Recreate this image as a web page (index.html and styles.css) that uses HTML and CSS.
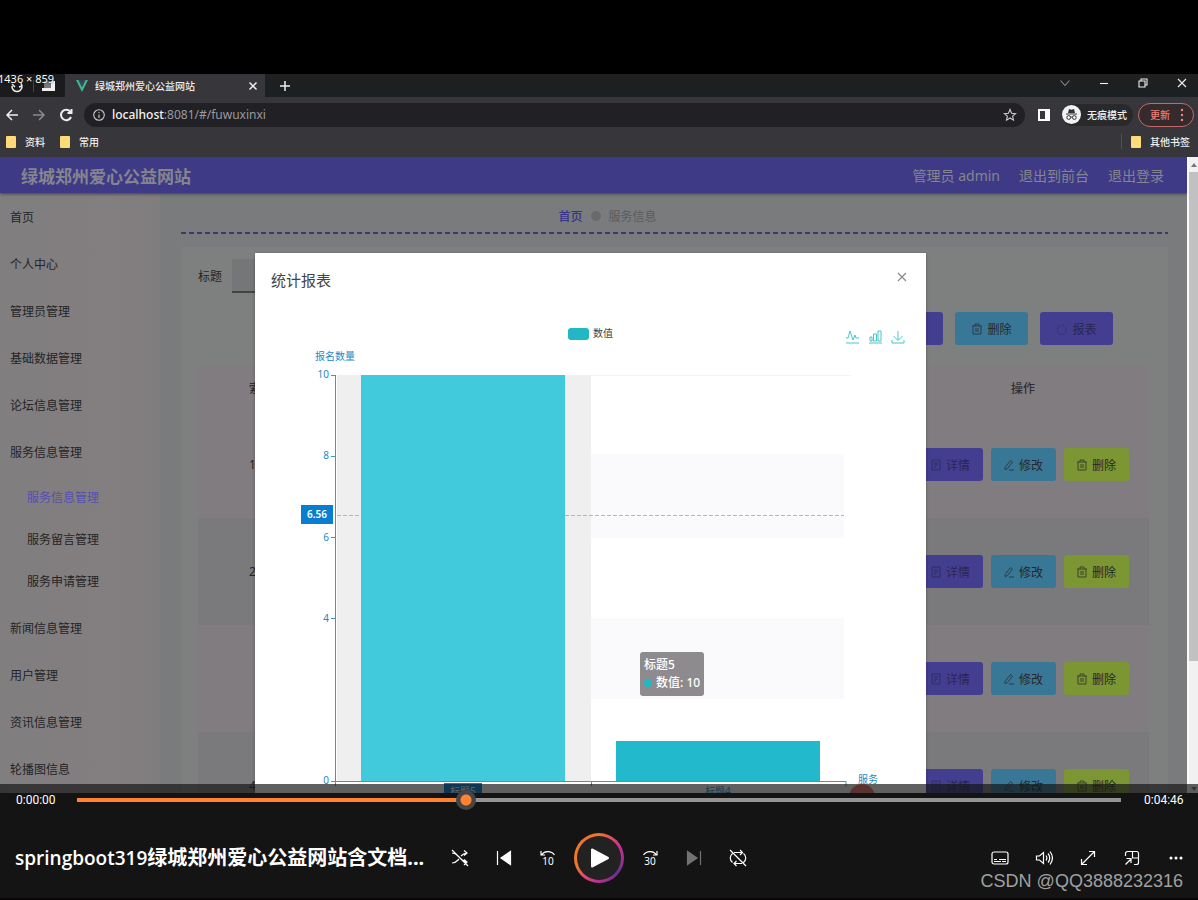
FILE: index.html
```html
<!DOCTYPE html>
<html lang="zh-CN">
<head>
<meta charset="utf-8">
<meta name="viewport" content="width=device-width, initial-scale=1">
<title>springboot319绿城郑州爱心公益网站含文档</title>
<link rel="stylesheet" href="styles.css">
</head>
<body>
<svg class="defs" aria-hidden="true">
  <symbol id="i-trash" viewBox="0 0 12 12"><path d="M1 3h10M4 3V1h4v2M2 3v8h8V3M5 5v4M7 5v4"/></symbol>
  <symbol id="i-edit" viewBox="0 0 12 12"><path d="M2 8.500 7.500 1.500l2 1.500L4.500 9.500 2 10.500zM6 11h5"/></symbol>
  <symbol id="i-doc" viewBox="0 0 12 12"><path d="M2 1h8v10H2zM4 4h4M4 6h4M4 8h2"/></symbol>
  <symbol id="i-pie" viewBox="0 0 12 12"><path d="M4 3a4.500 4.500 0 1 0 5 1M6 1v2l2-1"/></symbol>
</svg>
<div class="player">
  <main class="stage">
    <div class="browser">
      <div class="tabs">
        <div class="tabs-pinned">
          <svg width="16" height="16" viewBox="0 0 16 16" class="line"><path d="M3 8a5 5 0 0 0 10 1M3 6l3 3M12 5l1 3-3 1"/></svg>
          <i class="bar"></i>
          <svg width="14" height="12" viewBox="0 0 14 12"><path d="M0 8h9V1h4v10H0z" fill="#eee"/><path d="M2 1h7v7H2z" fill="#777"/></svg>
        </div>
        <div class="tab">
          <svg width="14" height="12" viewBox="0 0 14 12"><path d="M1 0h2.500L7 7l3.500-7H13L7 12z" fill="#3fb98a"/><path d="M3.500 0H6l1 2 1-2h2.500L7 7z" fill="#35495e"/></svg>
          <span class="tab-title">绿城郑州爱心公益网站</span>
          <button class="bare" aria-label="关闭标签页"><svg width="10" height="10" viewBox="0 0 10 10" class="line"><path d="m1.500 1.500 7 7m0-7-7 7"/></svg></button>
        </div>
        <button class="bare new-tab" aria-label="新标签页"><svg width="12" height="12" viewBox="0 0 12 12" class="line"><path d="M6 1v10M1 6h10"/></svg></button>
        <div class="window-buttons">
          <button class="bare dim" aria-label="搜索标签页"><svg width="12" height="12" viewBox="0 0 12 12" class="line thin"><path d="m1.500 3.500 4.500 5 4.500-5"/></svg></button>
          <button class="bare" aria-label="最小化"><svg width="12" height="12" viewBox="0 0 12 12" class="line thin"><path d="M2 6.500h8"/></svg></button>
          <button class="bare" aria-label="还原"><svg width="12" height="12" viewBox="0 0 12 12" class="line thin"><path d="M2 4h6v6H2zM4 4V2h6v6H8"/></svg></button>
          <button class="bare" aria-label="关闭"><svg width="12" height="12" viewBox="0 0 12 12" class="line thin"><path d="m2 2 8 8m0-8-8 8"/></svg></button>
        </div>
      </div>
      <div class="address-row">
        <button class="bare" aria-label="后退"><svg width="14" height="14" viewBox="0 0 14 14" class="line"><path d="M13 7H2M7 2 2 7l5 5"/></svg></button>
        <button class="bare dim" aria-label="前进"><svg width="14" height="14" viewBox="0 0 14 14" class="line"><path d="M1 7h11M7 2l5 5-5 5"/></svg></button>
        <button class="bare" aria-label="刷新"><svg width="14" height="14" viewBox="0 0 14 14" class="line bold"><path d="M12 9a5.200 5.200 0 1 1-.5-5M12.500 1v4h-4"/></svg></button>
        <div class="address">
          <svg width="12" height="12" viewBox="0 0 12 12" class="line thin"><circle cx="6" cy="6" r="5.300"/><path d="M6 5.500V9M6 3v1"/></svg>
          <span class="url"><b>localhost</b>:8081/#/fuwuxinxi</span>
          <svg width="14" height="14" viewBox="0 0 14 14" class="line thin"><path d="m7 1.500 1.600 3.700 4 .4-3 2.600.9 4L7 10l-3.500 2.200.9-4-3-2.600 4-.4z"/></svg>
        </div>
        <svg class="side-panel" width="12" height="12" viewBox="0 0 12 12"><path d="M0 0h12v12H0zM2 2v8h5V2z" fill="#fff" fill-rule="evenodd"/></svg>
        <span class="incognito">
          <svg width="19" height="19" viewBox="0 0 19 19"><circle cx="9.500" cy="9.500" r="9.500" fill="#f1f3f4"/><path d="M6 8l1-4 2.500.7L12 4l1 4zM4 8.500h11v1H4z" fill="#333"/><g fill="none" stroke="#333"><circle cx="6.700" cy="12.500" r="1.900"/><circle cx="12.300" cy="12.500" r="1.900"/><path d="M8.600 12h1.800"/></g></svg>
          无痕模式
        </span>
        <button class="update">更新<svg width="4" height="14" viewBox="0 0 4 14" fill="#ee8880"><circle cx="2" cy="2" r="1.200"/><circle cx="2" cy="7" r="1.200"/><circle cx="2" cy="12" r="1.200"/></svg></button>
      </div>
      <div class="bookmarks">
        <a href="#"><i class="folder"></i>资料</a>
        <a href="#"><i class="folder"></i>常用</a>
        <a href="#" class="other"><i class="folder"></i>其他书签</a>
      </div>
      <div class="viewport">
        <div class="app">
          <header class="app-header">
            <h1>绿城郑州爱心公益网站</h1>
            <span>管理员 admin</span>
            <a href="#">退出到前台</a>
            <a href="#">退出登录</a>
          </header>
          <div class="app-body">
            <nav class="side">
              <a href="#">首页</a>
              <a href="#">个人中心</a>
              <a href="#">管理员管理</a>
              <a href="#">基础数据管理</a>
              <a href="#">论坛信息管理</a>
              <a href="#">服务信息管理</a>
              <div class="sub">
                <a href="#" class="active">服务信息管理</a>
                <a href="#">服务留言管理</a>
                <a href="#">服务申请管理</a>
              </div>
              <a href="#">新闻信息管理</a>
              <a href="#">用户管理</a>
              <a href="#">资讯信息管理</a>
              <a href="#">轮播图信息</a>
            </nav>
            <section class="content">
              <div class="crumbs"><a href="#">首页</a><i class="crumb-dot"></i><span>服务信息</span></div>
              <div class="divider"></div>
              <div class="card">
                <div class="search"><label for="q">标题</label><input id="q" type="text"></div>
                <div class="toolbar">
                  <button class="btn purple">新增</button>
                  <button class="btn blue"><svg><use href="#i-trash"/></svg>删除</button>
                  <button class="btn purple faint"><svg><use href="#i-pie"/></svg>报表</button>
                </div>
                <table class="grid">
                  <thead><tr><th>索引</th><th class="ops">操作</th></tr></thead>
                  <tbody>
                    <tr><td>1</td><td><div class="row-ops"><button class="btn purple"><svg><use href="#i-doc"/></svg>详情</button><button class="btn blue"><svg><use href="#i-edit"/></svg>修改</button><button class="btn green"><svg><use href="#i-trash"/></svg>删除</button></div></td></tr>
                    <tr><td>2</td><td><div class="row-ops"><button class="btn purple"><svg><use href="#i-doc"/></svg>详情</button><button class="btn blue"><svg><use href="#i-edit"/></svg>修改</button><button class="btn green"><svg><use href="#i-trash"/></svg>删除</button></div></td></tr>
                    <tr><td></td><td><div class="row-ops"><button class="btn purple"><svg><use href="#i-doc"/></svg>详情</button><button class="btn blue"><svg><use href="#i-edit"/></svg>修改</button><button class="btn green"><svg><use href="#i-trash"/></svg>删除</button></div></td></tr>
                    <tr><td>4</td><td><div class="row-ops"><button class="btn purple"><svg><use href="#i-doc"/></svg>详情</button><button class="btn blue"><svg><use href="#i-edit"/></svg>修改</button><button class="btn green"><svg><use href="#i-trash"/></svg>删除</button></div></td></tr>
                  </tbody>
                </table>
              </div>
            </section>
          </div>
          <div class="dialog" role="dialog" aria-labelledby="dlg-title">
            <div class="dialog-head">
              <h2 id="dlg-title">统计报表</h2>
              <button class="bare" aria-label="关闭"><svg width="10" height="10" viewBox="0 0 10 10" class="line thin"><path d="m1 1 8 8m0-8-8 8"/></svg></button>
            </div>
            <svg class="chart" viewBox="255 305 671 488" role="img" aria-label="报名数量柱状图">
              <rect x="568" y="328" width="21" height="12" rx="3" fill="#21b7c5"/>
              <text x="593" y="337" class="legend">数值</text>
              <g class="tools">
                <path d="M846 343h13M846 338h2l2-7 3 9 2-5 1 3h3"/>
                <path d="M869 343h13M870 341v-4h2v4zM873.500 341v-7h3v7zM878 341v-10h3v10z"/>
                <path d="M892 340v3h12v-3M898 331v9M893.500 336l4.500 4.500 4.500-4.500"/>
              </g>
              <path d="M591 454h253v84H591zM591 618h253v81H591z" fill="#faf9fc"/>
              <path d="M337 375h254v406H337z" fill="#efefef"/>
              <path d="M591 375.500h260" stroke="#f3f2f8"/>
              <path d="M361 375h204v406H361z" fill="#41cadb"/>
              <path d="M616 741h204v40H616z" fill="#22b9cd"/>
              <path d="M337 515.500h24M565 515.500h279" stroke="#b5b5b9" stroke-dasharray="4 2"/>
              <path d="M335.500 375v411M331 375.500h5M331 456.500h5M331 537.500h5M331 618.500h5M331 781.500h515v5M591.500 781v5" class="axis"/>
              <g class="axis-text">
                <text x="315" y="360">报名数量</text>
                <g text-anchor="end"><text x="329" y="378">10</text><text x="329" y="459">8</text><text x="329" y="541">6</text><text x="329" y="622">4</text><text x="329" y="784">0</text></g>
                <text x="858" y="783">服务</text>
                <text x="718" y="795" text-anchor="middle">标题4</text>
              </g>
              <rect x="301" y="505" width="32" height="19" fill="#087ed0"/>
              <text x="317" y="518" class="pointer">6.56</text>
              <rect x="444" y="783" width="38" height="19" fill="#087ed0"/>
              <text x="463" y="795" class="pointer-cat">标题5</text>
              <circle cx="862" cy="797" r="13" fill="#f0786e"/>
            </svg>
            <div class="tip"><div>标题5</div><div><i></i>数值: 10</div></div>
          </div>
        </div>
        <div class="scrollbar"><i class="up"></i><i class="thumb"></i><i class="down"></i></div>
      </div>
    </div>
    <span class="dimensions">1436 × 859</span>
  </main>
  <footer class="controls">
    <div class="timeline">
      <time>0:00:00</time>
      <input type="range" min="0" max="1000" value="370" aria-label="播放进度">
      <time>0:04:46</time>
    </div>
    <div class="deck">
      <div class="title"><span>springboot319</span>绿城郑州爱心公益网站含文档...</div>
      <div class="group">
        <button class="ctl" aria-label="随机播放"><svg viewBox="0 0 18 18"><path d="M1 4c4 0 5 2 8 5s4 4 7 4M1 14c4 0 5-2 7-4M10 7c2-2 3-3 6-3M13 1.500 16 4l-3 2.500M13 10.500l3 2.500-3 3M1 1l16 16"/></svg></button>
        <button class="ctl" aria-label="上一个"><svg viewBox="0 0 18 18"><path d="M2.500 2v14"/><path d="M15.500 2.500v13L6 9z" fill="#fff"/></svg></button>
        <button class="ctl" aria-label="后退10秒"><svg viewBox="0 0 18 18"><path d="M2 2v4h4M2.500 6C5 2 12 1 15.500 6"/><text x="9" y="16">10</text></svg></button>
        <button class="play" aria-label="播放"><span><svg width="22" height="22" viewBox="0 0 22 22"><path d="M4 2.500v17L20 11z" fill="#fff" stroke="#fff" stroke-width="2" stroke-linejoin="round"/></svg></span></button>
        <button class="ctl" aria-label="前进30秒"><svg viewBox="0 0 18 18"><path d="M16 2v4h-4M15.500 6C13 2 6 1 2.500 6"/><text x="9" y="16">30</text></svg></button>
        <button class="ctl off" aria-label="下一个"><svg viewBox="0 0 18 18"><path d="M15.500 2v14"/><path d="M2.500 2.500v13L12 9z" fill="#fff"/></svg></button>
        <button class="ctl" aria-label="循环关闭"><svg viewBox="0 0 18 18"><path d="M5 3.500h8.500M11 1l2.500 2.500L11 6M13 14.500H5M7.500 12 5 14.500 7.500 17M3.500 4.500C.500 7 .500 11 3.500 13.500M14.500 13.500c3-2.500 3-6.500 0-9M1 1l16 16"/></svg></button>
      </div>
      <div class="group end">
        <button class="ctl" aria-label="字幕"><svg viewBox="0 0 18 18"><rect x="1" y="3" width="16" height="12" rx="2"/><path d="M3 12.500h7M11 12.500h4M3 10.500h3M8 10.500h7"/></svg></button>
        <button class="ctl" aria-label="音量"><svg viewBox="0 0 18 18"><path d="M1.500 7v4h3l4 3.500v-11L4.500 7zM11 6.500c1 1.500 1 3.500 0 5M13 4.500c2.300 2.500 2.300 6.500 0 9M15 2.500c3 4 3 9 0 13"/></svg></button>
        <button class="ctl" aria-label="全屏"><svg viewBox="0 0 18 18"><path d="M2.500 15.500l13-13M10 2.500h5.500V8M2.500 10v5.500H8"/></svg></button>
        <button class="ctl" aria-label="小窗播放"><svg viewBox="0 0 18 18"><path d="M2.500 7V4.500a2 2 0 0 1 2-2h9a2 2 0 0 1 2 2v9a2 2 0 0 1-2 2H11M9.500 3v6h6M2.500 15.500 8 10M3.500 9.500H8V14"/></svg></button>
        <button class="ctl" aria-label="更多"><svg viewBox="0 0 18 18"><g fill="#fff" stroke="none"><circle cx="4" cy="9" r="1.500"/><circle cx="9" cy="9" r="1.500"/><circle cx="14" cy="9" r="1.500"/></g></svg></button>
      </div>
    </div>
    <span class="watermark">CSDN @QQ3888232316</span>
  </footer>
</div>
</body>
</html>
```
FILE: styles.css
```css
* { box-sizing: border-box; }
body { margin: 0; background: #000; font-family: "Noto Sans", "Noto Sans CJK SC", sans-serif; font-size: 12px; }
a { color: inherit; text-decoration: none; }
button { font: inherit; color: inherit; cursor: pointer; }
h1, h2 { margin: 0; }
.defs { display: none; }
.bare { display: flex; padding: 0; border: 0; background: none; }
.line { fill: none; stroke: currentColor; stroke-width: 1.5; }
.line.thin { stroke-width: 1.1; }
.line.bold { stroke-width: 2; }

.player { display: flex; flex-direction: column; height: 100vh; }
.stage { position: relative; flex: 1; min-height: 0; padding-top: 74px; overflow: hidden; }
.stage::after { content: ""; position: absolute; z-index: 5; left: 0; right: 0; bottom: 0; height: 9px; background: rgba(20, 20, 20, .68); }
.browser { display: flex; flex-direction: column; height: 100%; background: #37363a; color: #eee; }
.dimensions { position: absolute; top: 72px; left: -2px; font-size: 11px; line-height: 14px; color: #fff; text-shadow: 0 0 2px #000; }

.tabs { display: flex; height: 25px; padding-bottom: 2px; background: linear-gradient(#20211f, #1b2024 23px, #37363a 23px); }
.tabs-pinned { display: flex; align-items: center; gap: 8px; width: 65px; padding-left: 9px; background: #1b1b1d; border-radius: 0 0 6px 0; }
.tabs-pinned .bar { width: 1px; height: 12px; background: #444; }
.tab { display: flex; align-items: center; gap: 6px; width: 200px; padding: 0 7px 0 10px; background: #37363a; }
.tab-title { flex: 1; font-size: 10px; font-weight: 500; white-space: nowrap; }
.new-tab { align-items: center; padding-left: 14px; }
.window-buttons { display: flex; align-items: center; gap: 27px; height: 18px; margin-left: auto; padding-right: 10px; }

.address-row { display: flex; align-items: center; height: 31px; padding: 0 4px 0 5px; }
.address-row > .bare { margin-right: 13px; }
.dim { color: #8a8a8d; }
.address { display: flex; flex: 1; align-items: center; gap: 7px; height: 24px; padding: 0 8px 0 9px; margin-left: -2px; border-radius: 12px; background: #212125; color: #ccc; }
.url { flex: 1; color: #9a9a9e; }
.url b { font-weight: 500; color: #f4f4f4; }
.side-panel { margin: 0 8px 0 13px; }
.incognito { display: flex; align-items: center; gap: 6px; height: 22px; padding-right: 6px; margin: 0 5px 0 4px; border-radius: 11px; background: #29292c; font-size: 10px; font-weight: 500; white-space: nowrap; }
.update { display: flex; align-items: center; justify-content: center; gap: 10px; width: 56px; height: 24px; padding: 0 2px 0 4px; border: 1px solid #c4696b; border-radius: 12px; background: #352a2c; color: #ee7f78; font-size: 10px; font-weight: 500; white-space: nowrap; }

.bookmarks { display: flex; align-items: center; gap: 15px; height: 27px; padding: 0 8px 4px 6px; font-size: 10px; font-weight: 500; }
.bookmarks a { display: flex; align-items: center; gap: 9px; }
.bookmarks .other { margin-left: auto; padding-left: 9px; border-left: 1px solid #515054; }
.folder { width: 10px; height: 12px; background: #fcdb78; border-radius: 1px; }

.viewport { display: flex; flex: 1; min-height: 0; }
.app { position: relative; display: flex; flex: 1; flex-direction: column; min-width: 0; overflow: hidden; color: #242426; }
.app-header { display: flex; flex: none; align-items: center; gap: 19px; height: 36px; padding: 0 23px 0 21px; background: #3f3a86; color: #85858f; font-size: 14px; box-shadow: 0 1px 3px rgba(0, 0, 0, .5); z-index: 1; }
.app-header h1 { flex: 1; font-size: 17px; font-weight: 700; }
.app-body { display: flex; flex: 1; min-height: 0; }
.side { flex: none; width: 160px; background: linear-gradient(90deg, #817e7f, #837e80 70%, #807d7f); }
.side a { display: flex; align-items: center; height: 47px; padding: 0 10px; }
.sub { padding: 1px 0 2px; }
.sub a { height: 42px; padding: 0 27px; }
.side .active { color: #544eb0; }
.content { flex: 1; min-width: 0; padding: 0 19px 0 21px; background: #797b7c; }
.crumbs { display: flex; align-items: center; justify-content: center; gap: 8px; height: 39px; padding: 6px 134px 0 0; color: #5c5c5e; }
.crumbs a { color: #37328c; font-weight: 500; }
.crumb-dot { width: 10px; height: 10px; border-radius: 5px; background: #6a6a6c; }
.divider { height: 2px; background: repeating-linear-gradient(90deg, #3b3973 0 5px, transparent 5px 8px); }
.card { margin-top: 13px; padding-top: 12px; background: #7e8080; }
.search { display: flex; align-items: center; gap: 10px; height: 34px; margin: 0 17px; }
.search input { width: 140px; height: 34px; border: 0; border-bottom: 2px solid #444447; background: #757678; }
.toolbar { display: flex; justify-content: flex-end; gap: 12px; padding: 19px 55px 20px 0; }
.btn { display: flex; align-items: center; justify-content: center; gap: 4px; width: 65px; height: 33px; padding: 0; border: 0; border-radius: 3px; color: #26282c; }
.btn svg { width: 12px; height: 12px; fill: none; stroke: currentColor; opacity: .75; }
.toolbar .btn { width: 73px; }
.purple { background: #433e90; color: #292655; }
.blue { background: #397797; }
.green { background: #7b9632; }
.faint svg { opacity: .4; }
.grid { width: calc(100% - 36px); margin: 0 18px 0 17px; border-collapse: collapse; background: #807c7f; }
.grid th { height: 46px; padding: 0; font-weight: 500; text-align: left; color: #303032; }
.grid th:first-child, .grid td:first-child { padding-left: 51px; }
.grid th.ops { width: 252px; text-align: center; }
.grid td { height: 107px; padding: 0; }
.grid tbody tr:nth-child(even) { background: #7a7a7c; }
.row-ops { display: flex; justify-content: center; gap: 8px; }

.dialog { position: absolute; top: 96px; left: 255px; width: 671px; background: #fff; z-index: 2; box-shadow: 0 1px 3px rgba(0, 0, 0, .3); color: #555; }
.dialog-head { display: flex; align-items: center; justify-content: space-between; height: 52px; padding: 0 19px 0 16px; }
.dialog-head h2 { font-size: 15px; font-weight: 400; color: #444; }
.dialog-head .bare { color: #888; padding-bottom: 4px; }
.chart { display: block; width: 100%; }
.chart text { font-size: 10px; }
.chart .legend { fill: #444; }
.tools { fill: none; stroke: #4cc5ca; }
.axis { fill: none; stroke: #3f97c5; }
.axis-text { fill: #2887c4; }
.chart .pointer { fill: #fff; font-size: 10px; font-weight: 600; text-anchor: middle; }
.chart .pointer-cat { fill: #fff; text-anchor: middle; }
.tip { position: absolute; top: 399px; left: 385px; padding: 4px; border-radius: 3px; background: #8e8b8f; color: #fff; font-weight: 500; line-height: 18px; white-space: nowrap; }
.tip i { display: inline-block; width: 8px; height: 8px; margin-right: 4px; border-radius: 4px; background: #21b7c5; }

.scrollbar { display: flex; flex-direction: column; width: 11px; background: #f1f1f1; border-left: 2px solid #fafafa; }
.scrollbar .up, .scrollbar .down { width: 0; margin: 6px auto 5px; border: 3px solid transparent; border-top: 0; border-bottom: 4px solid #777; }
.scrollbar .thumb { flex: 0 1 489px; background: #c1c1c1; }
.scrollbar .down { margin: auto auto 2px; border-top: 4px solid #777; border-bottom: 0; }

.controls { position: relative; z-index: 6; height: 107px; background: #141414; color: #fff; border-bottom: 2px solid #0a0708; }
.timeline { position: relative; display: flex; align-items: center; height: 20px; margin-top: -3px; padding: 0 16px; }
.timeline time { width: 38px; font-family: Roboto, sans-serif; white-space: nowrap; }
.timeline input { flex: 1; height: 20px; margin: 0 23px; appearance: none; background: linear-gradient(90deg, #ff8230 37%, #949494 37%) center / 100% 4px no-repeat; border-radius: 2px; }
.timeline input::-webkit-slider-thumb { appearance: none; width: 20px; height: 20px; border-radius: 10px; background: radial-gradient(circle, #ff8230 5px, #454545 6px); }
.deck { display: grid; grid-template-columns: 1fr auto 1fr; align-items: center; height: 60px; margin-top: 18px; }
.title { padding: 0 0 3px 15px; font-size: 20px; font-weight: 700; white-space: nowrap; }
.title span { font-family: "Open Sans", sans-serif; font-size: 19px; font-weight: 600; }
.group { display: flex; align-items: center; }
.end { justify-content: flex-end; }
.ctl { display: flex; align-items: center; justify-content: center; width: 44px; height: 44px; padding: 0; border: 0; background: none; }
.ctl svg { width: 18px; height: 18px; fill: none; stroke: #fff; stroke-width: 1.2; }
.ctl text { fill: #fff; stroke: none; font-size: 10px; text-anchor: middle; }
.off { opacity: .4; }
.play { width: 50px; height: 50px; margin: 0 4px; padding: 3px; border: 0; border-radius: 25px; background: conic-gradient(#ee7430, #c83392 60deg, #a2308f 90deg, #6d2f8d 130deg, #c33290 190deg, #e2506a 225deg, #f07a28 250deg, #ee7430); }
.play span { display: flex; align-items: center; justify-content: center; height: 100%; border-radius: 22px; background: #222; }
.watermark { position: absolute; right: 15px; bottom: 5px; font-family: "Liberation Sans", sans-serif; font-size: 18px; line-height: 24px; color: #a0a0a0; }
```
